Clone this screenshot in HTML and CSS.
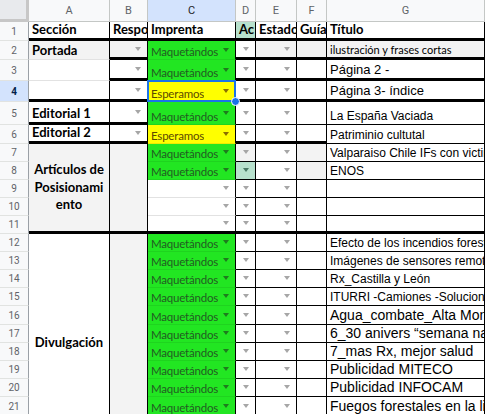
FILE: index.html
```html
<!DOCTYPE html>
<html lang="es">
<head>
<meta charset="utf-8">
<title>Hoja</title>
<link rel="stylesheet" href="styles.css">
</head>
<body>
<div class="sheet">
  <div class="corner"></div>
  <div class="ch">A</div><div class="ch">B</div><div class="ch sel">C</div><div class="ch">D</div><div class="ch">E</div><div class="ch">F</div><div class="ch">G</div>

  <div class="rh">1</div>
  <div class="c hb tb">Sección</div>
  <div class="c hb tb">Respo</div>
  <div class="c hb tb">Imprenta</div>
  <div class="c hb tb mint">Ac</div>
  <div class="c hb tb">Estado</div>
  <div class="c hb tb">Guía</div>
  <div class="c hb tb">Título</div>

  <div class="rh">2</div>
  <div class="c hb gray lb">Portada</div>
  <div class="c gray tb"><i class="dd"></i></div>
  <div class="c grn"><span class="t">Maquetándos</span><i class="dd"></i></div>
  <div class="c tb"><i class="dd"></i></div>
  <div class="c gray tb"><i class="dd"></i></div>
  <div class="c gray tb"></div>
  <div class="c gray tb cal">ilustración y frases cortas</div>

  <div class="rh">3</div>
  <div class="c lb"></div>
  <div class="c tb"><i class="dd"></i></div>
  <div class="c grn"><span class="t">Maquetándos</span><i class="dd"></i></div>
  <div class="c tb"><i class="dd"></i></div>
  <div class="c tb"><i class="dd"></i></div>
  <div class="c tb"></div>
  <div class="c tb a13">Página 2 -</div>

  <div class="rh sel">4</div>
  <div class="c tb"></div>
  <div class="c tb"><i class="dd"></i></div>
  <div class="c yel selc"><span class="t">Esperamos</span><i class="dd"></i><span class="hdl"></span></div>
  <div class="c tb"><i class="dd"></i></div>
  <div class="c tb"><i class="dd"></i></div>
  <div class="c tb"></div>
  <div class="c tb a13">Página 3- índice</div>

  <div class="rh">5</div>
  <div class="c hb tb">Editorial 1</div>
  <div class="c tb"><i class="dd"></i></div>
  <div class="c grn"><span class="t">Maquetándos</span><i class="dd"></i></div>
  <div class="c"><i class="dd"></i></div>
  <div class="c"><i class="dd"></i></div>
  <div class="c"></div>
  <div class="c a12">La España Vaciada</div>

  <div class="rh">6</div>
  <div class="c hb tb">Editorial 2</div>
  <div class="c tb"><i class="dd"></i></div>
  <div class="c yel"><span class="t">Esperamos</span><i class="dd"></i></div>
  <div class="c tb"><i class="dd"></i></div>
  <div class="c tb"><i class="dd"></i></div>
  <div class="c tb"></div>
  <div class="c a12">Patriminio cultutal</div>

  <div class="rh">7</div>
  <div class="c hb gray tb merged span5">Artículos de Posisionamiento</div>
  <div class="c gray tb span5"></div>
  <div class="c grn"><span class="t">Maquetándos</span><i class="dd"></i></div>
  <div class="c gray"><i class="dd"></i></div>
  <div class="c"><i class="dd"></i></div>
  <div class="c gray"></div>
  <div class="c a12">Valparaiso Chile IFs con victimas</div>

  <div class="rh">8</div>
  <div class="c grn"><span class="t">Maquetándos</span><i class="dd"></i></div>
  <div class="c mint"><i class="dd dk"></i></div>
  <div class="c"><i class="dd"></i></div>
  <div class="c gray"></div>
  <div class="c a12">ENOS</div>

  <div class="rh">9</div>
  <div class="c lb"><i class="dd"></i></div>
  <div class="c"><i class="dd"></i></div>
  <div class="c"><i class="dd"></i></div>
  <div class="c"></div>
  <div class="c"></div>

  <div class="rh">10</div>
  <div class="c lb"><i class="dd"></i></div>
  <div class="c"><i class="dd"></i></div>
  <div class="c"><i class="dd"></i></div>
  <div class="c"></div>
  <div class="c"></div>

  <div class="rh">11</div>
  <div class="c tb"><i class="dd"></i></div>
  <div class="c tb"><i class="dd"></i></div>
  <div class="c tb"><i class="dd"></i></div>
  <div class="c tb"></div>
  <div class="c tb"></div>

  <div class="rh">12</div>
  <div class="c hb merged span12">Divulgación</div>
  <div class="c gray span12"></div>
  <div class="c grn"><span class="t">Maquetándos</span><i class="dd"></i></div>
  <div class="c"><i class="dd"></i></div>
  <div class="c"><i class="dd"></i></div>
  <div class="c"></div>
  <div class="c a12">Efecto de los incendios forestales</div>

  <div class="rh">13</div>
  <div class="c grn"><span class="t">Maquetándos</span><i class="dd"></i></div>
  <div class="c"><i class="dd"></i></div>
  <div class="c"><i class="dd"></i></div>
  <div class="c"></div>
  <div class="c a12">Imágenes de sensores remotos</div>

  <div class="rh">14</div>
  <div class="c grn"><span class="t">Maquetándos</span><i class="dd"></i></div>
  <div class="c"><i class="dd"></i></div>
  <div class="c"><i class="dd"></i></div>
  <div class="c"></div>
  <div class="c a12">Rx_Castilla y León</div>

  <div class="rh">15</div>
  <div class="c grn"><span class="t">Maquetándos</span><i class="dd"></i></div>
  <div class="c"><i class="dd"></i></div>
  <div class="c"><i class="dd"></i></div>
  <div class="c"></div>
  <div class="c a12">ITURRI -Camiones -Soluciones</div>

  <div class="rh">16</div>
  <div class="c grn"><span class="t">Maquetándos</span><i class="dd"></i></div>
  <div class="c"><i class="dd"></i></div>
  <div class="c"><i class="dd"></i></div>
  <div class="c"></div>
  <div class="c a14">Agua_combate_Alta Montaña</div>

  <div class="rh">17</div>
  <div class="c grn"><span class="t">Maquetándos</span><i class="dd"></i></div>
  <div class="c"><i class="dd"></i></div>
  <div class="c"><i class="dd"></i></div>
  <div class="c"></div>
  <div class="c a14">6_30 anivers “semana nacional</div>

  <div class="rh">18</div>
  <div class="c grn"><span class="t">Maquetándos</span><i class="dd"></i></div>
  <div class="c"><i class="dd"></i></div>
  <div class="c"><i class="dd"></i></div>
  <div class="c"></div>
  <div class="c a14">7_mas Rx, mejor salud</div>

  <div class="rh">19</div>
  <div class="c grn"><span class="t">Maquetándos</span><i class="dd"></i></div>
  <div class="c"><i class="dd"></i></div>
  <div class="c"><i class="dd"></i></div>
  <div class="c"></div>
  <div class="c a14">Publicidad MITECO</div>

  <div class="rh">20</div>
  <div class="c grn"><span class="t">Maquetándos</span><i class="dd"></i></div>
  <div class="c"><i class="dd"></i></div>
  <div class="c"><i class="dd"></i></div>
  <div class="c"></div>
  <div class="c a14">Publicidad INFOCAM</div>

  <div class="rh">21</div>
  <div class="c grn"><span class="t">Maquetándos</span><i class="dd"></i></div>
  <div class="c"><i class="dd"></i></div>
  <div class="c"><i class="dd"></i></div>
  <div class="c"></div>
  <div class="c a14">Fuegos forestales en la literatura</div>

  <div class="rh">22</div>
  <div class="c grn"><span class="t">Maquetándos</span><i class="dd"></i></div>
  <div class="c"><i class="dd"></i></div>
  <div class="c"><i class="dd"></i></div>
  <div class="c"></div>
  <div class="c a14"></div>

  <div class="rh">23</div>
  <div class="c grn"><span class="t">Maquetándos</span><i class="dd"></i></div>
  <div class="c"><i class="dd"></i></div>
  <div class="c"><i class="dd"></i></div>
  <div class="c"></div>
  <div class="c a14"></div>
</div>
</body>
</html>
```

FILE: styles.css
```css
* { box-sizing: border-box; margin: 0; padding: 0; }
html, body { width: 485px; height: 414px; overflow: hidden; background: #fff; }
body { font-family: "Liberation Sans", Arial, sans-serif; }

.sheet {
  display: grid;
  grid-template-columns: 29px 81px 38px 88px 20px 41px 30px 158px;
  grid-template-rows: 22px 19px 19px 21px 21px 23px 19px 18px 18px 18px 18px 18px
                      18px 18px 18px 18px 19px 18px 18px 18px 18px 19px 18px 18px;
}

.corner {
  background: #e8eaed;
  border-right: 3px solid #c7c7c7;
  border-bottom: 3px solid #c7c7c7;
}
.ch {
  display: flex; align-items: center; justify-content: center;
  font: 11px Roboto, sans-serif; color: #5f6368;
  background: #f8f9fa;
  border-right: 1px solid #c4c7c5; border-bottom: 1px solid #c4c7c5;
}
.ch.sel { background: #d3e3fd; color: #1f1f1f; }
.rh {
  display: flex; align-items: center; justify-content: center;
  font: 10px Roboto, sans-serif; color: #5f6368;
  background: #f8f9fa;
  border-right: 1px solid #9aa0a6; border-bottom: 1px solid #e1e3e1;
}
.rh.sel { background: #d3e3fd; color: #041e49; font-weight: 700; }

.c {
  display: flex; align-items: flex-end;
  min-width: 0;
  padding: 0 2px 1px 3px;
  border-right: 1px solid #000; border-bottom: 1px solid #000;
  background: #fff; color: #000;
  white-space: nowrap; overflow: hidden;
  font: 12px Lato, "Open Sans", sans-serif;
}
.tb { border-bottom: 3px solid #000; }
.lb { border-bottom-color: #e2e2e2; }
.hb { font-weight: 700; font-size: 13px; }
.gray { background: #f3f3f3; }
.mint { background: #b7e1cd; }
.grn { background: #22e622; color: #225c22; border-bottom-color: rgba(0,0,0,0.08); }
.yel { background: #ffff00; color: #5c4a00; border-bottom-color: rgba(0,0,0,0.08); }
.grn .t, .yel .t { font-size: 11.5px; letter-spacing: -0.2px; }
.cal { font-size: 11px; }
.a12 { font: 12px "Liberation Sans", Arial, sans-serif; }
.a13 { font: 13px "Liberation Sans", Arial, sans-serif; }
.a14 { font: 14px "Liberation Sans", Arial, sans-serif; }

.t { overflow: hidden; min-width: 0; }
.dd {
  flex: none; align-self: center;
  margin-left: auto; margin-right: 4px;
  width: 0; height: 0;
  border-left: 3.5px solid transparent; border-right: 3.5px solid transparent;
  border-top: 4px solid #a6a6a6;
}
.grn .dd { border-top-color: #1e7b1e; }
.yel .dd { border-top-color: #8a6d00; }
.dd.dk { border-top-color: #4b7a66; }

.merged {
  align-items: center; justify-content: center; text-align: center;
  white-space: normal; overflow-wrap: anywhere;
  line-height: 17.5px; padding: 0 4px;
}
.span5 { grid-row: span 5; }
.span12 { grid-row: span 12; }

.selc { position: relative; overflow: visible; }
.selc::after {
  content: ""; position: absolute;
  inset: -1px -1px -1px -1px;
  border: 2px solid #1a73e8;
  pointer-events: none;
}
.hdl {
  position: absolute; right: -5px; bottom: -5px; z-index: 2;
  width: 9px; height: 9px; border-radius: 50%;
  background: #1a73e8; border: 1px solid #fff;
}
```
